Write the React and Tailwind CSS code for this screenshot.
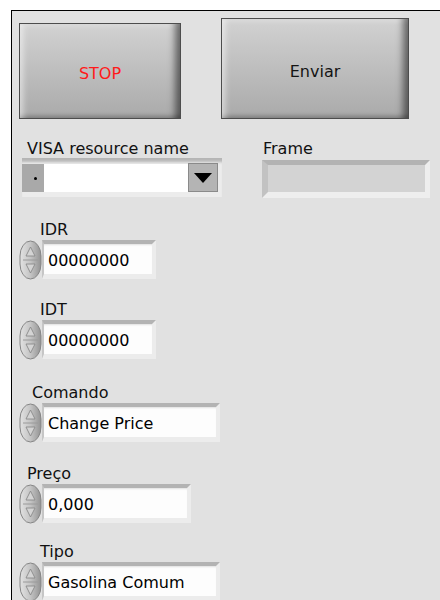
import React from 'react'

const font = "font-['DejaVu_Sans',Verdana,sans-serif]"

function PanelButton({ label, className, textClass }) {
  return (
    <button
      className={`flex items-center justify-center border border-[#4d4d4d] bg-gradient-to-b from-[#d2d2d2] to-[#aaaaaa] shadow-[inset_-9px_0_7px_-4px_rgba(0,0,0,0.5),inset_7px_0_6px_-4px_rgba(255,255,255,0.55),inset_0_5px_4px_-3px_rgba(255,255,255,0.5),inset_0_-5px_4px_-3px_rgba(0,0,0,0.25)] pt-[6px] text-[16px] ${className}`}
    >
      <span className={textClass}>{label}</span>
    </button>
  )
}

function Spinner() {
  return (
    <svg width="23" height="40" viewBox="0 0 23 40" className="shrink-0 relative z-10">
      <defs>
        <linearGradient id="spin" x1="0" x2="1" y1="0" y2="0">
          <stop offset="0" stopColor="#e2e2e2" />
          <stop offset="0.5" stopColor="#c4c4c4" />
          <stop offset="1" stopColor="#939393" />
        </linearGradient>
      </defs>
      <rect x="1" y="1" width="21" height="38" rx="10.5" ry="15" fill="url(#spin)" stroke="#868686" />
      <line x1="4" y1="20" x2="19" y2="20" stroke="#9a9a9a" />
      <polygon points="11.5,7 7,16 16,16" fill="#d4d4d4" stroke="#8a8a8a" strokeWidth="0.9" />
      <polygon points="7,24 16,24 11.5,33" fill="#d4d4d4" stroke="#8a8a8a" strokeWidth="0.9" />
    </svg>
  )
}

function NumControl({ label, value, labelClass, fieldClass, className }) {
  return (
    <div className={className}>
      <div className={`leading-[18px] text-[16px] text-[#111] ${labelClass}`}>{label}</div>
      <div className="mt-px flex items-start">
        <Spinner />
        <div
          className={`h-[39px] border-t-[4px] border-t-[#b3b3b3] border-l-[2px] border-l-[#c6c6c6] border-r-[4px] border-r-[#ececec] border-b-[5px] border-b-[#ececec] bg-[#fdfdfd] shadow-[inset_0_2px_2px_-1px_rgba(0,0,0,0.12)] ${fieldClass}`}
        >
          <div className="pl-[4px] pt-[4px] text-[16px] leading-[26px] text-black">{value}</div>
        </div>
      </div>
    </div>
  )
}

export default function App() {
  return (
    <div className={`h-[600px] overflow-hidden bg-white pl-[11px] pt-[10px] ${font}`}>
      <div className="h-full border-l border-t border-black bg-[#e1e1e1]">
        {/* boolean buttons */}
        <div className="ml-[7px] mt-[7px] flex items-end">
          <PanelButton label="STOP" className="h-[96px] w-[162px]" textClass="text-[#ff1a1a]" />
          <PanelButton label="Enviar" className="ml-[40px] h-[101px] w-[188px]" textClass="text-[#141414]" />
        </div>

        {/* VISA resource + Frame indicator */}
        <div className="mt-[21px] flex items-start">
          <div className="ml-[10px]">
            <div className="pl-[5px] text-[16px] leading-[18px] text-[#111]">VISA resource name</div>
            <div className="flex h-[39px] w-[200px] bg-[#ececec] pb-[5px] pr-[4px] pt-[6px] shadow-[inset_0_6px_3px_-2px_#b5b5b5]">
              <div className="relative w-[22px] bg-[#a9a9a9]">
                <span className="absolute left-[12px] top-[13px] h-[3px] w-[3px] rounded-full bg-black" />
              </div>
              <div className="flex-1 bg-white" />
              <div className="-mt-[1px] flex h-[29px] w-[30px] items-center justify-center border border-[#8a8a8a] bg-[#b4b4b4]">
                <svg width="18" height="10" viewBox="0 0 18 10">
                  <polygon points="0,0 18,0 9,10" fill="#000" />
                </svg>
              </div>
            </div>
          </div>
          <div className="ml-[40px]">
            <div className="pl-px text-[16px] leading-[18px] text-[#111]">Frame</div>
            <div className="mt-[2px] h-[38px] w-[168px] border-t-[5px] border-t-[#b3b3b3] border-l-[6px] border-l-[#c2c2c2] border-r-[5px] border-r-[#eeeeee] border-b-[6px] border-b-[#eeeeee] bg-[#d3d3d3]" />
          </div>
        </div>

        {/* numeric / ring controls */}
        <div className="ml-[7px] flex flex-col">
          <NumControl className="mt-[23px]" label="IDR" labelClass="pl-[21px]" value="00000000" fieldClass="w-[114px]" />
          <NumControl className="mt-[21px]" label="IDT" labelClass="pl-[21px]" value="00000000" fieldClass="w-[114px]" />
          <NumControl className="mt-[24px]" label="Comando" labelClass="pl-[13px]" value="Change Price" fieldClass="w-[178px]" />
          <NumControl className="mt-[22px]" label="Preço" labelClass="pl-[8px]" value="0,000" fieldClass="w-[149px]" />
          <NumControl className="mt-[19px]" label="Tipo" labelClass="pl-[21px]" value="Gasolina Comum" fieldClass="w-[178px]" />
        </div>
      </div>
    </div>
  )
}
